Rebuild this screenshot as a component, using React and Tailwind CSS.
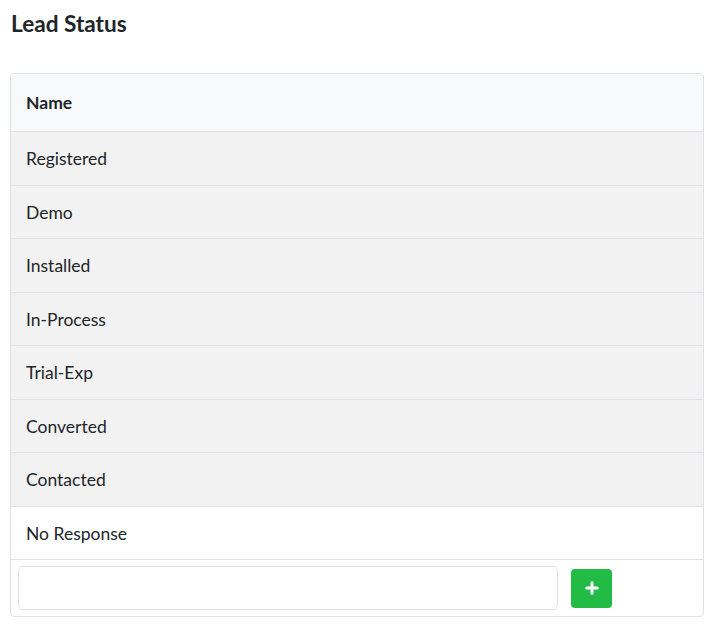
import { Plus } from "lucide-react";

const statuses = [
  "Registered",
  "Demo",
  "Installed",
  "In-Process",
  "Trial-Exp",
  "Converted",
  "Contacted",
];

const App = () => {
  return (
    <div className="min-h-[635px] bg-white px-[10px] pt-[10px] text-[#212529] font-['Lato','Liberation_Sans',sans-serif]">
      <h1 className="pl-[1px] text-[22.6px] font-bold leading-[28px]">Lead Status</h1>

      {/* Table card */}
      <div className="mt-[35px] w-[694px] overflow-hidden rounded-[4px] border border-[#dee2e6]">
        <div className="flex h-[58px] items-center border-b border-[#dee2e6] bg-[#f8f9fa] px-[15px] pt-[2px] text-[17.5px] font-bold">
          Name
        </div>

        {statuses.map((s) => (
          <div
            key={s}
            className="flex h-[53.5px] items-center border-b border-[#dee2e6] bg-[#f2f2f2] px-[15px] pt-[2px] text-[17.5px]"
          >
            {s}
          </div>
        ))}

        <div className="flex h-[53.5px] items-center border-b border-[#dee2e6] bg-white px-[15px] pt-[2px] text-[17.5px]">
          No Response
        </div>

        {/* Add row */}
        <div className="flex items-center gap-[13px] px-[7px] py-[6px]">
          <input
            type="text"
            className="h-[44px] w-[540px] rounded-[5px] border border-[#dee2e6] bg-white px-3 outline-none"
          />
          <button className="flex h-[39px] w-[41px] items-center justify-center rounded-[4px] bg-[#22bb46] text-white">
            <Plus size={18} strokeWidth={4} />
          </button>
        </div>
      </div>
    </div>
  );
};

export default App;
